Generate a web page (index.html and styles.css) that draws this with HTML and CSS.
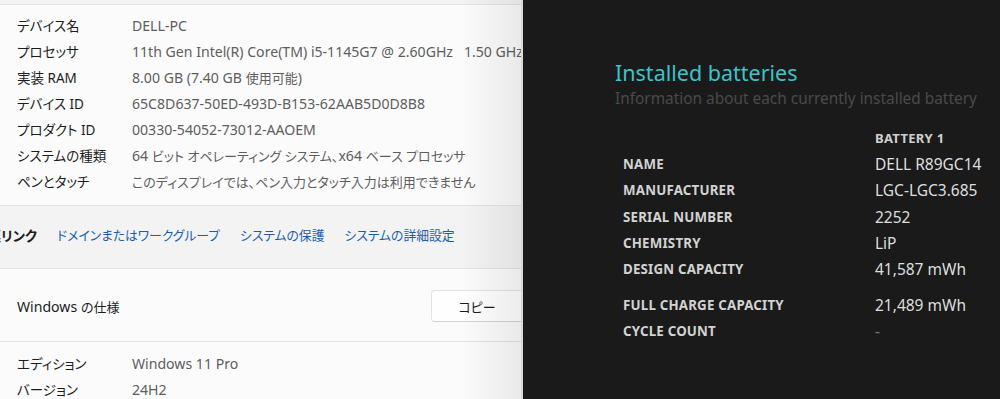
FILE: index.html
```html
<!DOCTYPE html>
<html lang="ja">
<head>
<meta charset="utf-8">
<link rel="stylesheet" href="styles.css">
</head>
<body>
<div class="screen">
  <section class="settings">
    <div class="card specs">
      <div class="spec"><span class="lbl">デバイス名</span><span class="val">DELL-PC</span></div>
      <div class="spec"><span class="lbl">プロセッサ</span><span class="val">11th Gen Intel(R) Core(TM) i5-1145G7 @ 2.60GHz&nbsp;&nbsp;&nbsp;1.50 GHz</span></div>
      <div class="spec"><span class="lbl">実装 RAM</span><span class="val">8.00 GB (7.40 GB <span class="ja">使用可能</span>)</span></div>
      <div class="spec"><span class="lbl">デバイス ID</span><span class="val">65C8D637-50ED-493D-B153-62AAB5D0D8B8</span></div>
      <div class="spec"><span class="lbl">プロダクト ID</span><span class="val">00330-54052-73012-AAOEM</span></div>
      <div class="spec"><span class="lbl">システムの種類</span><span class="val">64 <span class="ja">ビット オペレーティング システム、</span>x64 <span class="ja">ベース プロセッサ</span></span></div>
      <div class="spec"><span class="lbl">ペンとタッチ</span><span class="val"><span class="ja">このディスプレイでは、ペン入力とタッチ入力は利用できません</span></span></div>
    </div>
    <div class="links">
      <span class="links-title">関連リンク</span>
      <a class="link">ドメインまたはワークグループ</a>
      <a class="link">システムの保護</a>
      <a class="link">システムの詳細設定</a>
    </div>
    <div class="card win-head">
      <span class="win-title">Windows <span class="ja">の仕様</span></span>
      <button class="copy">コピー</button>
    </div>
    <div class="card specs win-specs">
      <div class="spec"><span class="lbl">エディション</span><span class="val">Windows 11 Pro</span></div>
      <div class="spec"><span class="lbl">バージョン</span><span class="val">24H2</span></div>
    </div>
  </section>
  <section class="battery">
    <h1 class="b-title">Installed batteries</h1>
    <p class="b-sub">Information about each currently installed battery</p>
    <div class="b-table">
      <div class="b-row"><span class="b-lbl"></span><span class="b-head">BATTERY 1</span></div>
      <div class="b-row"><span class="b-lbl">NAME</span><span class="b-val">DELL R89GC14</span></div>
      <div class="b-row"><span class="b-lbl">MANUFACTURER</span><span class="b-val">LGC-LGC3.685</span></div>
      <div class="b-row"><span class="b-lbl">SERIAL NUMBER</span><span class="b-val">2252</span></div>
      <div class="b-row"><span class="b-lbl">CHEMISTRY</span><span class="b-val">LiP</span></div>
      <div class="b-row"><span class="b-lbl">DESIGN CAPACITY</span><span class="b-val">41,587 mWh</span></div>
      <div class="b-row gap"><span class="b-lbl">FULL CHARGE CAPACITY</span><span class="b-val">21,489 mWh</span></div>
      <div class="b-row"><span class="b-lbl">CYCLE COUNT</span><span class="b-val dim">-</span></div>
    </div>
  </section>
</div>
</body>
</html>
```

FILE: styles.css
```css
* { box-sizing: border-box; }
html, body { margin: 0; padding: 0; }
body {
  width: 1000px;
  height: 399px;
  overflow: hidden;
  font-family: "Noto Sans", "Noto Sans CJK JP", sans-serif;
  font-feature-settings: "palt";
}
.screen {
  display: flex;
  height: 399px;
}
.settings {
  position: relative;
  width: 523px;
  flex-shrink: 0;
  background: #f3f3f3;
  overflow: hidden;
  padding-top: 4px;
  border-right: 2px solid #d9d9d9;
}
.settings::after {
  content: "";
  position: absolute;
  top: 0;
  right: 0;
  width: 60px;
  height: 100%;
  background: linear-gradient(to right, rgba(0,0,0,0), rgba(0,0,0,0.07));
  pointer-events: none;
}
.card {
  background: #fbfbfb;
  border-top: 1px solid #e3e3e3;
}
.specs {
  padding: 7px 0 11px 17px;
}
.spec {
  display: flex;
  height: 26px;
  align-items: center;
  font-size: 14.1px;
  white-space: nowrap;
}
.lbl {
  width: 115px;
  flex-shrink: 0;
  font-size: 13.5px;
  color: #1d1d1d;
}
.val {
  color: #5e5e5e;
}
.ja {
  font-size: 13px;
}
.links {
  display: flex;
  align-items: center;
  gap: 20px;
  height: 63px;
  padding: 0 0 5px 0;
  background: #f3f3f3;
  border-top: 1px solid #e3e3e3;
  font-size: 12.8px;
  white-space: nowrap;
}
.links-title {
  margin-left: -26px;
  font-size: 13.5px;
  font-weight: bold;
  color: #1d1d1d;
}
.link {
  color: #1a5fab;
}
.win-head {
  display: flex;
  align-items: center;
  justify-content: space-between;
  height: 73px;
  padding: 2px 0 0 17px;
}
.win-title {
  font-size: 14.1px;
  color: #1d1d1d;
}
.copy {
  width: 110px;
  height: 32px;
  margin-right: -20px;
  background: #fefefe;
  border: 1px solid #e3e3e3;
  border-bottom-color: #d2d2d2;
  border-radius: 4px;
  font-family: inherit;
  font-feature-settings: "palt";
  font-size: 13px;
  color: #1d1d1d;
  padding: 0 18px 0 0;
}
.win-specs {
  padding-top: 8px;
  height: 100%;
}
.battery {
  flex: 1;
  background: #1a1a1a;
  padding: 59px 0 0 92px;
  font-family: "Noto Sans", sans-serif;
}
.b-title {
  margin: 0;
  font-size: 21.5px;
  font-weight: normal;
  line-height: 28px;
  color: #3ec3c9;
}
.b-sub {
  margin: 0;
  font-size: 15.4px;
  line-height: 24px;
  color: #4a4a4a;
}
.b-table {
  margin: 14px 0 0 8px;
  white-space: nowrap;
}
.b-row {
  display: flex;
  align-items: center;
  height: 26.2px;
}
.b-row.gap {
  margin-top: 10px;
}
.b-lbl {
  width: 252px;
  flex-shrink: 0;
  font-size: 13.3px;
  font-weight: bold;
  color: #d2d2d2;
  letter-spacing: 0.2px;
}
.b-head {
  font-size: 13px;
  font-weight: bold;
  color: #cfcfcf;
  letter-spacing: 0.3px;
}
.b-val {
  font-size: 15.5px;
  color: #dedede;
}
.dim {
  color: #7a7a7a;
}
```
